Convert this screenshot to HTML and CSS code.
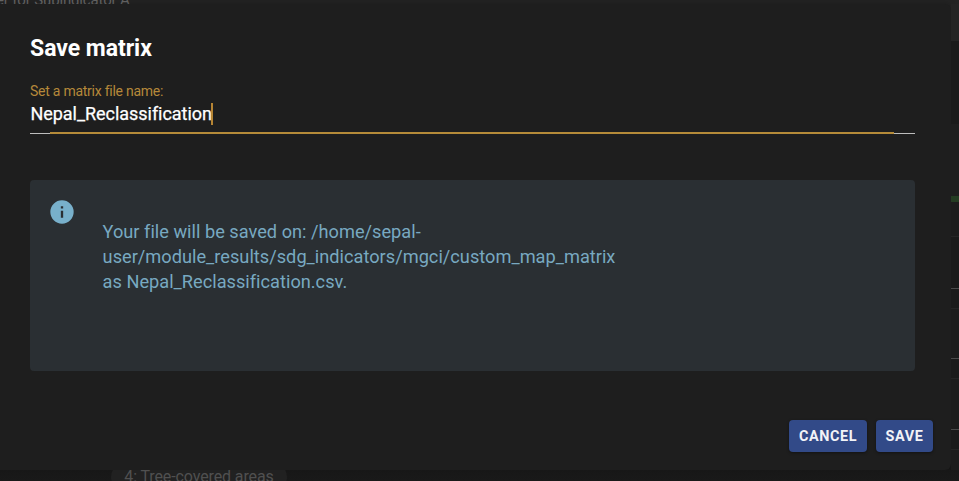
FILE: index.html
```html
<!DOCTYPE html>
<html lang="en">
<head>
<meta charset="utf-8">
<title>Save matrix</title>
<link rel="stylesheet" href="styles.css">
</head>
<body>
<div class="page">
  <div class="page-top"><span class="page-heading">er for Subindicator A</span></div>
  <div class="middle">
    <main class="dialog">
      <h1 class="title">Save matrix</h1>
      <div class="field">
        <div class="label">Set a matrix file name:</div>
        <div class="value"><span class="value-text">Nepal_Reclassification</span><i class="caret"></i></div>
        <div class="underline"><i class="focus-line"></i></div>
      </div>
      <section class="alert">
        <svg class="info" viewBox="0 0 24 24"><path d="M13 9h-2V7h2m0 10h-2v-6h2m-1-9A10 10 0 0 0 2 12a10 10 0 0 0 10 10 10 10 0 0 0 10-10A10 10 0 0 0 12 2z"/></svg>
        <p class="message">Your file will be saved on: /home/sepal-<br>user/module_results/sdg_indicators/mgci/custom_map_matrix<br>as Nepal_Reclassification.csv.</p>
      </section>
      <div class="actions">
        <button class="btn cancel">CANCEL</button>
        <button class="btn save">SAVE</button>
      </div>
    </main>
    <aside class="rail">
      <div class="r-head"></div>
      <div class="r-band"></div>
      <div class="r-body"></div>
      <div class="r-green"></div>
      <div class="r-gap"></div>
      <div class="row first"></div>
      <div class="row"></div>
      <div class="row"></div>
    </aside>
  </div>
  <div class="page-bottom"><span class="chip">4: Tree-covered areas</span></div>
</div>
</body>
</html>
```
FILE: styles.css
```css
* { box-sizing: border-box; }
body { margin: 0; background: #1a1a1a; font-family: Roboto, sans-serif; color: #fff; }
.page { width: 959px; height: 481px; overflow: hidden; display: flex; flex-direction: column; }
.page-top { height: 4px; background: #232323; overflow: hidden; display: flex; align-items: flex-end; }
.page-heading { font-size: 15px; letter-spacing: -.15px; line-height: 20px; color: #666; white-space: nowrap; margin: 0 0 -6px -4px; }
.middle { height: 466px; display: flex; background: linear-gradient(#232323 50%, #181818 50%); }
.dialog { width: 951px; background: #1e1e1e; border-radius: 0 6px 6px 0; padding: 29px 18px 18px 30px; box-shadow: 0 0 6px rgba(0,0,0,.25); display: flex; flex-direction: column; }
.title { margin: 0; font-size: 23px; line-height: 32px; font-weight: 700; letter-spacing: -.03px; white-space: nowrap; }
.field { margin: 18px 18px 0 0; }
.label { font-size: 14px; letter-spacing: -.25px; line-height: 16px; color: #b6893a; }
.value { display: flex; height: 24px; margin-top: 3px; font-size: 18px; line-height: 24px; }
.value-text { width: 181px; padding-left: .5px; letter-spacing: -.04px; white-space: nowrap; -webkit-text-stroke: .25px #fff; }
.caret { width: 2px; height: 22px; background: #b58433; margin-top: 1px; }
.underline { height: 3px; margin-top: 5px; border-bottom: 1px solid #bdbdbd; padding: 1px 21px 0 20px; }
.focus-line { display: block; height: 2px; background: #b58b39; }
.alert { margin: 46px 18px 0 0; height: 191px; background: #2a2f33; border-radius: 4px; padding: 20px; display: flex; }
.info { width: 28px; height: 28px; margin: -2px 0 0 -2px; fill: #78b0cb; flex: none; }
.message { margin: 19px 0 0 26.6px; color: #78a9c1; font-size: 18.2px; letter-spacing: .01px; line-height: 25px; white-space: nowrap; }
.actions { margin-top: auto; display: flex; justify-content: flex-end; gap: 9px; }
.btn { height: 32px; border: 0; border-radius: 4px; background: #324a88; color: #f2f3f7; font: 700 14.4px/32px Roboto, sans-serif; letter-spacing: .6px; padding: 1px 0 0; text-align: center; box-shadow: 0 1px 3px rgba(0,0,0,.4); }
.cancel { width: 78px; }
.save { width: 57px; }
.rail { width: 8px; background: #1c1c1c; }
.r-head { height: 37px; background: #242424; }
.r-band { height: 83px; background: #1a1a1a; }
.r-body { height: 72px; background: #1e1e1e; }
.r-green { height: 6px; background: #243c22; }
.r-gap { height: 86px; background: linear-gradient(#1c1c1c 34px, #252525 34px 35px, #1a1a1a 35px); }
.row { height: 71px; border-top: 1px solid #4a4a4a; background: linear-gradient(#1a1a1a 19px, #242424 19px 20px, #1c1c1c 20px); }
.first { height: 70px; }
.page-bottom { height: 11px; background: linear-gradient(#171717, #191919); overflow: hidden; padding-left: 111px; display: flex; align-items: flex-start; }
.chip { width: 176px; height: 28px; margin-top: -7px; border-radius: 14px; background: #212121; color: #505050; font-size: 16px; letter-spacing: -.12px; line-height: 28px; text-align: center; white-space: nowrap; flex: none; }
```
